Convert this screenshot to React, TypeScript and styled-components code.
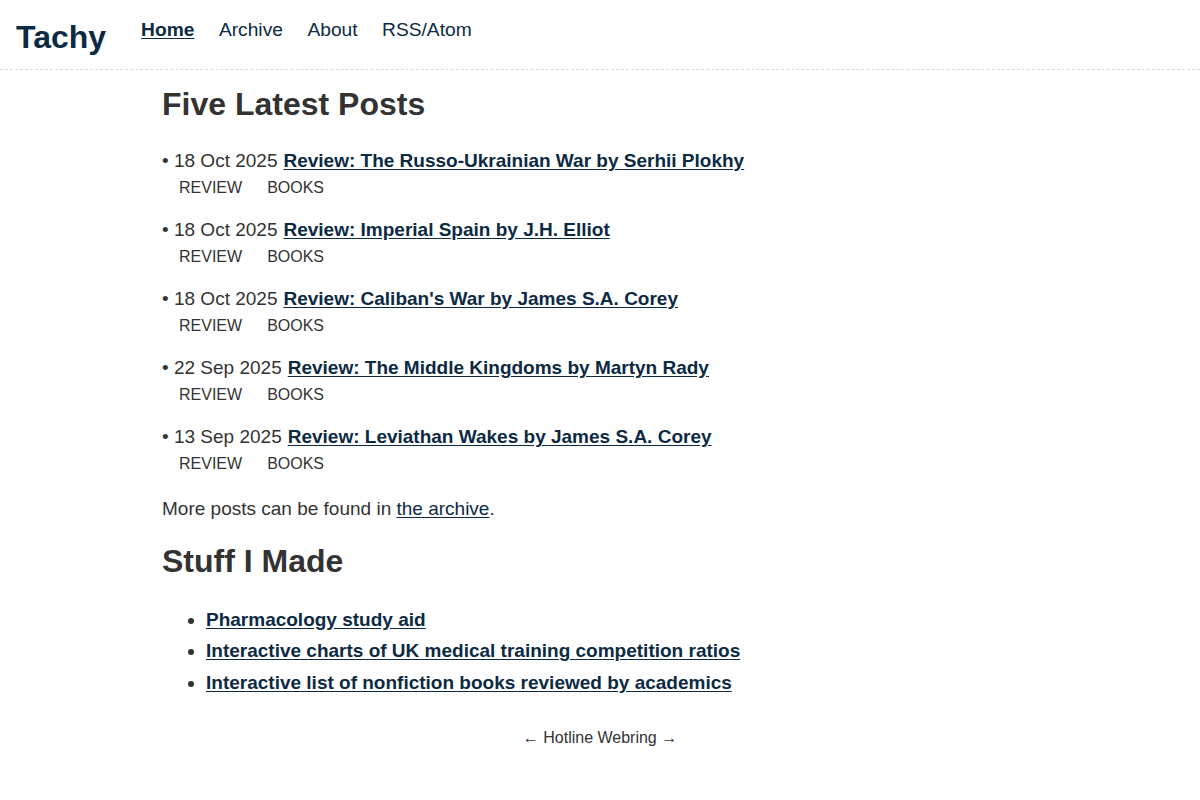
import styled, { createGlobalStyle } from "styled-components"

const GlobalStyle = createGlobalStyle`
  html, body {
    margin: 0;
    padding: 0;
    background: #fff;
    color: #333;
    font-family: "Liberation Sans", Arial, sans-serif;
  }
`

const Header = styled.header`
  display: flex;
  align-items: center;
  height: 69px;
  padding: 0 16px;
  border-bottom: 1px dashed #dcdcdc;
`
const Logo = styled.a`
  font-size: 32px;
  font-weight: 700;
  color: #0c2a43;
  text-decoration: none;
  margin-top: 6px;
  margin-right: 35px;
`
const Nav = styled.nav`
  display: flex;
  gap: 24.5px;
  margin-top: -9px;
`
const NavLink = styled.a<{ $active?: boolean }>`
  font-size: 19.2px;
  color: #0c2a43;
  font-weight: ${(p) => (p.$active ? 700 : 400)};
  text-decoration: ${(p) => (p.$active ? "underline" : "none")};
  text-underline-offset: 2px;
`

const Main = styled.main`
  width: 876px;
  margin: 0 auto;
`
const Heading = styled.h2`
  font-size: 32px;
  font-weight: 700;
  color: #333;
  margin: 16px 0 26px;
  line-height: 37px;
`
const PostList = styled.ul`
  list-style: none;
  margin: 0;
  padding: 0;
`
const Post = styled.li`
  margin-bottom: 16px;
`
const PostLine = styled.div`
  font-size: 19px;
  line-height: 24px;
`
const PostDate = styled.span`
  margin-right: 6px;
`
const TitleLink = styled.a`
  font-weight: 700;
  color: #0c2a43;
  text-decoration: underline;
  text-underline-offset: 2px;
`
const Tags = styled.div`
  display: flex;
  gap: 25px;
  padding-left: 17px;
  font-size: 16px;
  line-height: 29px;
  color: #333;
`
const Paragraph = styled.p`
  font-size: 19px;
  line-height: 24px;
  margin: 19px 0 22px;
`
const TextLink = styled.a`
  color: #0c2a43;
  text-decoration: underline;
  text-underline-offset: 2px;
`
const MadeList = styled.ul`
  margin: -2px 0 0;
  padding-left: 44px;
  font-size: 19px;
  line-height: 31.3px;
`
const Footer = styled.footer`
  text-align: center;
  font-size: 16px;
  margin-top: 31px;
  color: #333;
`
const Arrow = styled.a`
  color: #333;
  text-decoration: none;
  font-size: 16px;
`

const posts = [
  { date: "18 Oct 2025", title: "Review: The Russo-Ukrainian War by Serhii Plokhy" },
  { date: "18 Oct 2025", title: "Review: Imperial Spain by J.H. Elliot" },
  { date: "18 Oct 2025", title: "Review: Caliban's War by James S.A. Corey" },
  { date: "22 Sep 2025", title: "Review: The Middle Kingdoms by Martyn Rady" },
  { date: "13 Sep 2025", title: "Review: Leviathan Wakes by James S.A. Corey" },
]

const projects = [
  "Pharmacology study aid",
  "Interactive charts of UK medical training competition ratios",
  "Interactive list of nonfiction books reviewed by academics",
]

export default function App() {
  return (
    <>
      <GlobalStyle />
      <Header>
        <Logo href="#">Tachy</Logo>
        <Nav>
          <NavLink $active href="#">Home</NavLink>
          <NavLink href="#">Archive</NavLink>
          <NavLink href="#">About</NavLink>
          <NavLink href="#">RSS/Atom</NavLink>
        </Nav>
      </Header>
      <Main>
        <Heading>Five Latest Posts</Heading>
        <PostList>
          {posts.map((post, i) => (
            <Post key={i}>
              <PostLine>
                <PostDate>• {post.date}</PostDate>
                <TitleLink href="#">{post.title}</TitleLink>
              </PostLine>
              <Tags>
                <span>REVIEW</span>
                <span>BOOKS</span>
              </Tags>
            </Post>
          ))}
        </PostList>
        <Paragraph>
          More posts can be found in <TextLink href="#">the archive</TextLink>.
        </Paragraph>
        <Heading>Stuff I Made</Heading>
        <MadeList>
          {projects.map((p) => (
            <li key={p}>
              <TitleLink href="#">{p}</TitleLink>
            </li>
          ))}
        </MadeList>
        <Footer>
          <Arrow href="#">←</Arrow> Hotline Webring <Arrow href="#">→</Arrow>
        </Footer>
      </Main>
    </>
  )
}
